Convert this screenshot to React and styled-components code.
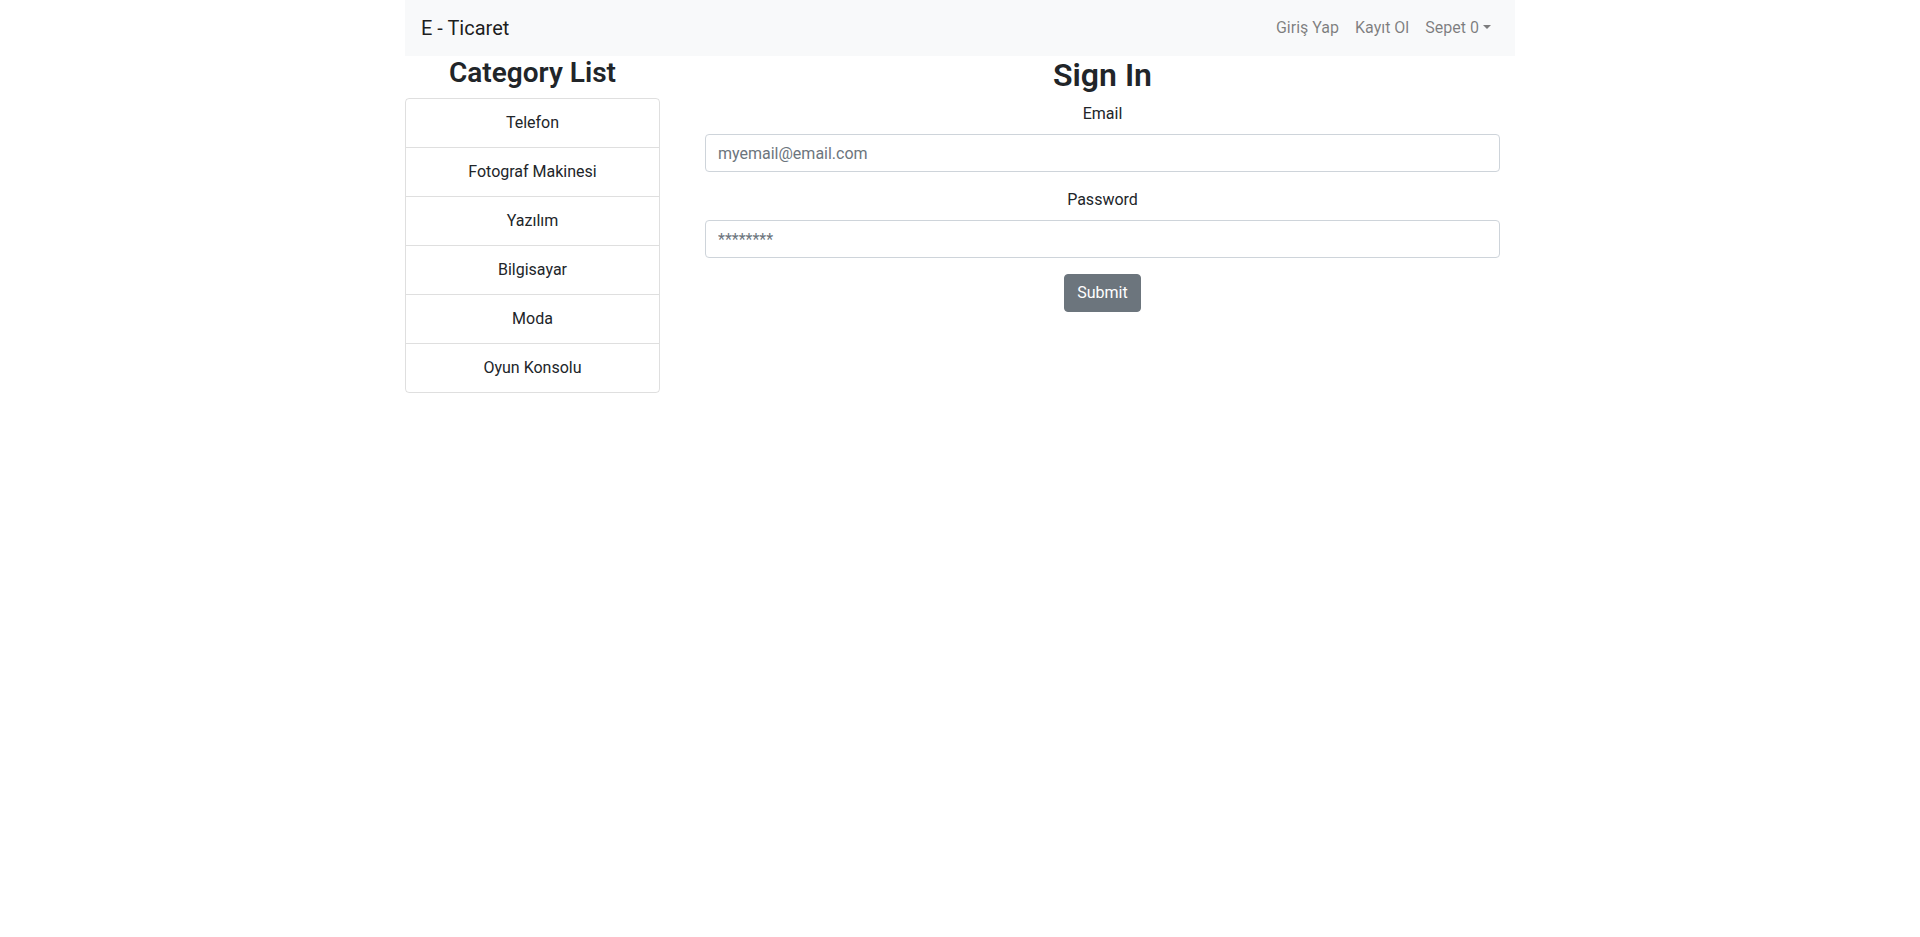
import React from 'react'
import styled, { createGlobalStyle } from 'styled-components'

const GlobalStyle = createGlobalStyle`
*, *::before, *::after { box-sizing: border-box; }
body {
  margin: 0;
  font-family: "Segoe UI", Roboto, "Liberation Sans", sans-serif;
  font-size: 16px;
  line-height: 1.5;
  color: #212529;
  background: #fff;
}
`

const Container = styled.div`
width: 100%;
max-width: 1140px;
margin: 0 auto;
padding: 0 15px;
`
const Navbar = styled.nav`
display: flex;
align-items: center;
justify-content: space-between;
padding: 8px 16px;
background-color: #f8f9fa;
`
const Brand = styled.a`
padding: 5px 0;
font-size: 20px;
line-height: 30px;
color: rgba(0, 0, 0, 0.9);
text-decoration: none;
margin-right: 16px;
`
const NavList = styled.ul`
display: flex;
list-style: none;
margin: 0;
padding: 0;
`
const NavLink = styled.a`
display: block;
padding: 8px;
color: rgba(0, 0, 0, 0.5);
text-decoration: none;
cursor: pointer;
&::after {
  display: ${p => (p.$toggle ? 'inline-block' : 'none')};
  margin-left: 0.255em;
  vertical-align: 0.255em;
  content: '';
  border-top: 0.3em solid;
  border-right: 0.3em solid transparent;
  border-left: 0.3em solid transparent;
}
`
const Row = styled.div`
display: flex;
margin: 0 -15px;
`
const Col = styled.div`
flex: 0 0 ${p => p.$span / 12 * 100}%;
max-width: ${p => p.$span / 12 * 100}%;
padding: 0 15px;
`
const SideTitle = styled.h3`
margin: 0 0 8px;
font-size: 28px;
font-weight: 600;
line-height: 1.2;
text-align: center;
`
const ListGroup = styled.ul`
list-style: none;
margin: 0;
padding: 0;
border: 1px solid rgba(0, 0, 0, 0.125);
border-radius: 4px;
`
const ListItem = styled.li`
padding: 12px 20px;
text-align: center;
cursor: pointer;
& + & {
  border-top: 1px solid rgba(0, 0, 0, 0.125);
}
`
const FormWrap = styled.div`
padding: 0 15px;
text-align: center;
`
const FormTitle = styled.h2`
margin: 0 0 8px;
font-size: 32px;
font-weight: 600;
line-height: 1.2;
`
const Group = styled.div`
margin-bottom: 16px;
`
const Label = styled.label`
display: block;
margin-bottom: 8px;
`
const Input = styled.input`
display: block;
width: 100%;
height: 38px;
padding: 6px 12px;
font: inherit;
color: #495057;
text-align: left;
background: #fff;
border: 1px solid #ced4da;
border-radius: 4px;
outline: none;
&::placeholder { color: #6c757d; opacity: 1; }
`
const Button = styled.button`
display: inline-block;
padding: 6px 12px;
font: inherit;
line-height: 1.5;
color: #fff;
background-color: #6c757d;
border: 1px solid #6c757d;
border-radius: 4px;
cursor: pointer;
`

const categories = ['Telefon', 'Fotograf Makinesi', 'Yazılım', 'Bilgisayar', 'Moda', 'Oyun Konsolu']

export default function App() {
  return (
    <>
      <GlobalStyle />
      <Container>
        <Navbar>
          <Brand href="#">E - Ticaret</Brand>
          <NavList>
            <li><NavLink>Giriş Yap</NavLink></li>
            <li><NavLink>Kayıt Ol</NavLink></li>
            <li><NavLink $toggle>Sepet 0</NavLink></li>
          </NavList>
        </Navbar>
        <Row>
          <Col $span={3}>
            <SideTitle>Category List</SideTitle>
            <ListGroup>
              {categories.map(c => <ListItem key={c}>{c}</ListItem>)}
            </ListGroup>
          </Col>
          <Col $span={9}>
            <FormWrap>
              <FormTitle>Sign In</FormTitle>
              <form onSubmit={e => e.preventDefault()}>
                <Group>
                  <Label htmlFor="email">Email</Label>
                  <Input id="email" type="email" placeholder="myemail@email.com" />
                </Group>
                <Group>
                  <Label htmlFor="password">Password</Label>
                  <Input id="password" type="password" placeholder="********" />
                </Group>
                <Button type="submit">Submit</Button>
              </form>
            </FormWrap>
          </Col>
        </Row>
      </Container>
    </>
  )
}
